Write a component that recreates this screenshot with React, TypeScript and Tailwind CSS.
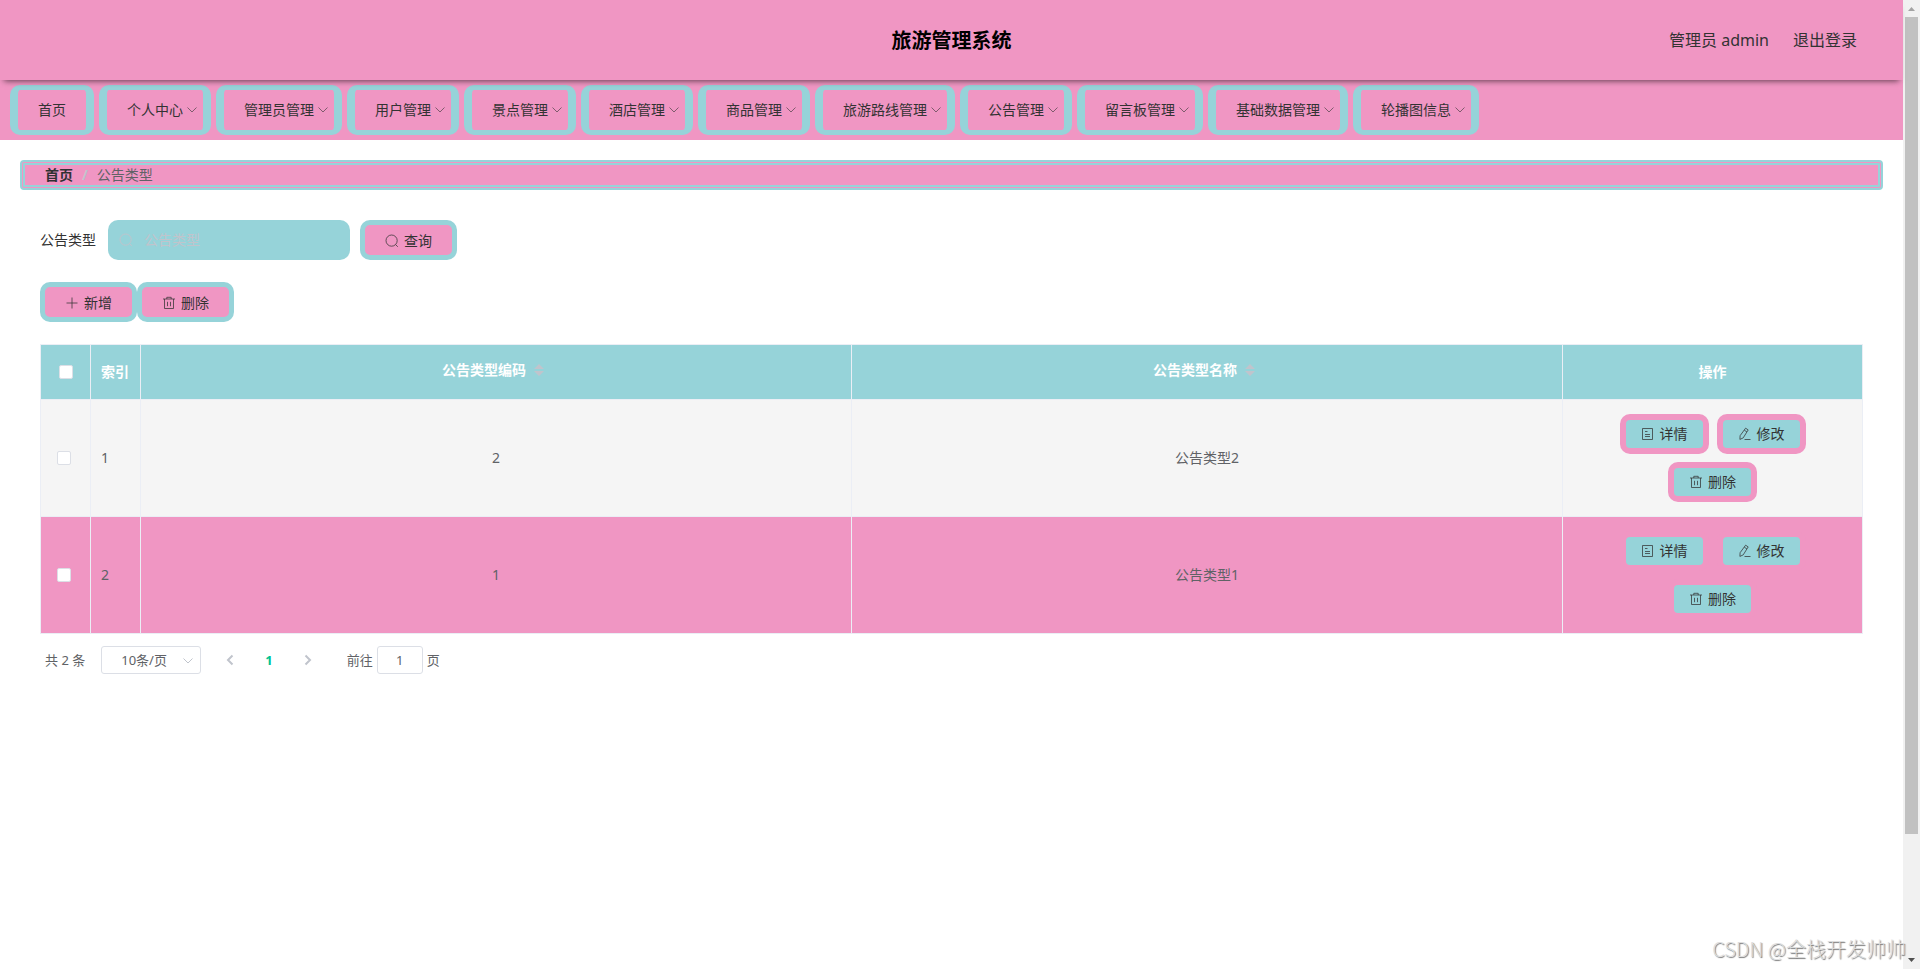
import React, { useState } from 'react';

const NAV_ITEMS = [
  '个人中心',
  '管理员管理',
  '用户管理',
  '景点管理',
  '酒店管理',
  '商品管理',
  '旅游路线管理',
  '公告管理',
  '留言板管理',
  '基础数据管理',
  '轮播图信息',
];

const ROWS = [
  { index: 1, code: '2', name: '公告类型2' },
  { index: 2, code: '1', name: '公告类型1' },
];

// Thin line icons, all on a 14x14 grid
const ICONS = {
  search: 'M6.6 1a5.6 5.6 0 1 1 0 11.2a5.6 5.6 0 1 1 0-11.2zM10.6 10.6l2.2 2.2',
  plus: 'M7 1.5v11M1.5 7h11',
  trash: 'M1 3h12M4.8 3V1.3h4.4V3M2.5 3v9.5h9V3M5.5 5.8v4.4M8.5 5.8v4.4',
  detail: 'M1.5 1.5h10v11h-10zM4 4.5h2.5M4 7.5h5M4 9.5h5',
  edit: 'M7.6 1.2l2.6 1.7-5 8-3.3 1.5.2-3.7zM6.3 3.2l2.6 1.7M6.5 12.5h6',
  down: 'M2.5 4.5l4.5 4.5 4.5-4.5',
  left: 'M9.5 2.5l-4.5 4.5 4.5 4.5',
  right: 'M4.5 2.5l4.5 4.5-4.5 4.5',
};

interface IconProps {
  name: keyof typeof ICONS;
  className?: string;
  strokeWidth?: number;
}

function Icon({ name, className = '', strokeWidth = 1 }: IconProps) {
  return (
    <svg
      viewBox="0 0 14 14"
      className={`size-3.5 shrink-0 ${className}`}
      fill="none"
      stroke="currentColor"
      strokeWidth={strokeWidth}
      aria-hidden="true"
    >
      <path d={ICONS[name]} />
    </svg>
  );
}

function ToolButton({ icon, label }: { icon: keyof typeof ICONS; label: string }) {
  return (
    <button
      type="button"
      className="flex h-10 items-center gap-[5px] rounded-[10px] border-5 border-[#96d3d9] bg-[#f096c3] px-5 pt-0.5 text-sm leading-5 text-[#333]"
    >
      <Icon name={icon} className="text-[#333]/75" />
      {label}
    </button>
  );
}

function RowButton({ icon, label }: { icon: keyof typeof ICONS; label: string }) {
  return (
    <button
      type="button"
      className="flex h-10 items-center gap-[5px] rounded-[10px] border-6 border-[#f096c3] bg-[#96d3d9] px-[15px] text-sm leading-5 text-[#333]"
    >
      <Icon name={icon} className="text-[#333]/75" />
      {label}
    </button>
  );
}

function CheckBox({ label }: { label: string }) {
  return (
    <input
      type="checkbox"
      aria-label={label}
      className="block size-3.5 appearance-none rounded-xs border border-[#dcdfe6] bg-white checked:bg-[#00c292]"
    />
  );
}

function SortHeader({ label }: { label: string }) {
  return (
    <div className="flex items-center justify-center gap-2 pr-1.5 pb-1">
      {label}
      <svg viewBox="0 0 10 12" className="h-3 w-2.5 text-[#c0c4cc]" fill="currentColor" aria-hidden="true">
        <path d="M5 0l5 5H0zM0 7h10l-5 5z" />
      </svg>
    </div>
  );
}

function Scrollbar() {
  return (
    <div className="flex w-[17px] shrink-0 flex-col items-center bg-[#f1f1f1]" aria-hidden="true">
      <svg viewBox="0 0 17 17" className="size-[17px] shrink-0" fill="#a3a3a3">
        <path d="M5 11h7L8.5 7z" />
      </svg>
      <div className="w-[13px] flex-[817_1_0%] bg-[#c1c1c1]" />
      <div className="flex-[118_1_0%]" />
      <svg viewBox="0 0 17 17" className="size-[17px] shrink-0" fill="#505050">
        <path d="M5 6h7l-3.5 4z" />
      </svg>
    </div>
  );
}

export default function App() {
  const [keyword, setKeyword] = useState('');
  const [page, setPage] = useState('1');

  return (
    <div className="relative flex h-screen overflow-hidden bg-white font-['Noto_Sans','Noto_Sans_CJK_SC',sans-serif] text-sm text-[#606266]">
      <div className="min-w-0 flex-1">
        <header className="relative z-10 grid h-20 grid-cols-[1fr_auto_1fr] items-center bg-[#f096c3] shadow-[0_5px_6px_-4px_rgba(0,0,0,0.6)]">
          <h1 className="col-start-2 pt-0.5 text-xl font-bold text-black">旅游管理系统</h1>
          <div className="flex justify-end gap-6 pr-[46px] text-base text-[#333]">
            <span>管理员 admin</span>
            <a href="#logout">退出登录</a>
          </div>
        </header>

        <nav className="flex h-15 items-center gap-[5px] bg-[#f096c3] px-2.5 text-[#333]">
          <a href="#home" className="flex h-[50px] items-center rounded-[10px] border-x-8 border-y-5 border-[#96d3d9] px-5">
            首页
          </a>
          {NAV_ITEMS.map((item) => (
            <button
              key={item}
              type="button"
              className="flex h-[50px] items-center gap-0.5 rounded-[10px] border-x-8 border-y-5 border-[#96d3d9] pr-1 pl-5"
            >
              {item}
              <Icon name="down" className="text-[#333]/60" />
            </button>
          ))}
        </nav>

        <main className="px-5 pt-5">
          <ol className="flex h-[30px] items-center rounded-sm border-5 border-double border-[#96d3d9] bg-[#f096c3] px-5">
            <li>
              <a href="#home" className="font-bold text-[#303133]">首页</a>
            </li>
            <li className="px-[9px] font-bold text-[#c0c4cc]" aria-hidden="true">/</li>
            <li>公告类型</li>
          </ol>

          <div className="px-5 pt-[30px]">
            <form className="flex items-center" onSubmit={(e) => e.preventDefault()}>
              <label htmlFor="keyword" className="pr-3 text-[#333]">公告类型</label>
              <div className="mr-2.5 flex h-10 w-[242px] items-center rounded-[10px] bg-[#96d3d9] pr-3 pl-[11px] text-[#c0c4cc]">
                <Icon name="search" />
                <input
                  id="keyword"
                  value={keyword}
                  onChange={(e) => setKeyword(e.target.value)}
                  placeholder="公告类型"
                  className="w-full bg-transparent pl-[11px] text-[#333] outline-none placeholder:text-[#c0c4cc]"
                />
              </div>
              <ToolButton icon="search" label="查询" />
            </form>

            <div className="flex pt-[22px]">
              <ToolButton icon="plus" label="新增" />
              <ToolButton icon="trash" label="删除" />
            </div>

            <table className="mt-[22px] w-full table-fixed border-separate border-spacing-0 border-t border-l border-[#ebeef5] [&_td]:border-r [&_td]:border-b [&_td]:border-[#ebeef5] [&_th]:border-r [&_th]:border-b [&_th]:border-[#ebeef5]">
              <thead>
                <tr className="h-[55px] bg-[#96d3d9] text-white">
                  <th className="w-[50px] pl-[18px]">
                    <CheckBox label="全选" />
                  </th>
                  <th className="w-[50px] pl-2.5 text-left">索引</th>
                  <th><SortHeader label="公告类型编码" /></th>
                  <th><SortHeader label="公告类型名称" /></th>
                  <th className="w-[300px]">操作</th>
                </tr>
              </thead>
              <tbody>
                {ROWS.map((row) => (
                  <tr key={row.index} className="h-[117px] bg-[#f5f5f5] text-center even:bg-[#f096c3]">
                    <td className="pl-4">
                      <CheckBox label={`选择第 ${row.index} 行`} />
                    </td>
                    <td className="pl-2.5 text-left">{row.index}</td>
                    <td>{row.code}</td>
                    <td>{row.name}</td>
                    <td>
                      <div className="flex flex-wrap justify-center gap-2 px-10">
                        <RowButton icon="detail" label="详情" />
                        <RowButton icon="edit" label="修改" />
                        <RowButton icon="trash" label="删除" />
                      </div>
                    </td>
                  </tr>
                ))}
              </tbody>
            </table>

            <div className="flex items-center px-[5px] pt-3 text-[13px]">
              <span className="pr-4">共 2 条</span>
              <div className="relative">
                <select
                  aria-label="每页条数"
                  className="h-7 w-[100px] appearance-none rounded-[3px] border border-[#dcdfe6] bg-white pl-[19px]"
                >
                  <option>10条/页</option>
                  <option>20条/页</option>
                  <option>50条/页</option>
                </select>
                <Icon name="down" className="pointer-events-none absolute top-2 right-1.5 text-[#c0c4cc]" />
              </div>
              <div className="flex items-center gap-7 pl-[22px] text-[#c0c4cc]">
                <button type="button" aria-label="上一页" disabled>
                  <Icon name="left" strokeWidth={2} />
                </button>
                <button type="button" className="font-bold text-[#00c292]">1</button>
                <button type="button" aria-label="下一页" disabled>
                  <Icon name="right" strokeWidth={2} />
                </button>
              </div>
              <label htmlFor="page" className="pr-1 pl-8">前往</label>
              <input
                id="page"
                value={page}
                onChange={(e) => setPage(e.target.value)}
                className="h-7 w-[46px] rounded-[3px] border border-[#dcdfe6] bg-white text-center"
              />
              <span className="pl-1">页</span>
            </div>
          </div>
        </main>
      </div>

      <Scrollbar />

      <div className="absolute right-3.5 bottom-1.5 font-['Noto_Sans_CJK_SC',sans-serif] text-xl leading-7 font-light text-[#ddd] [text-shadow:1px_1px_1px_#777]">
        CSDN @全栈开发帅帅
      </div>
    </div>
  );
}
